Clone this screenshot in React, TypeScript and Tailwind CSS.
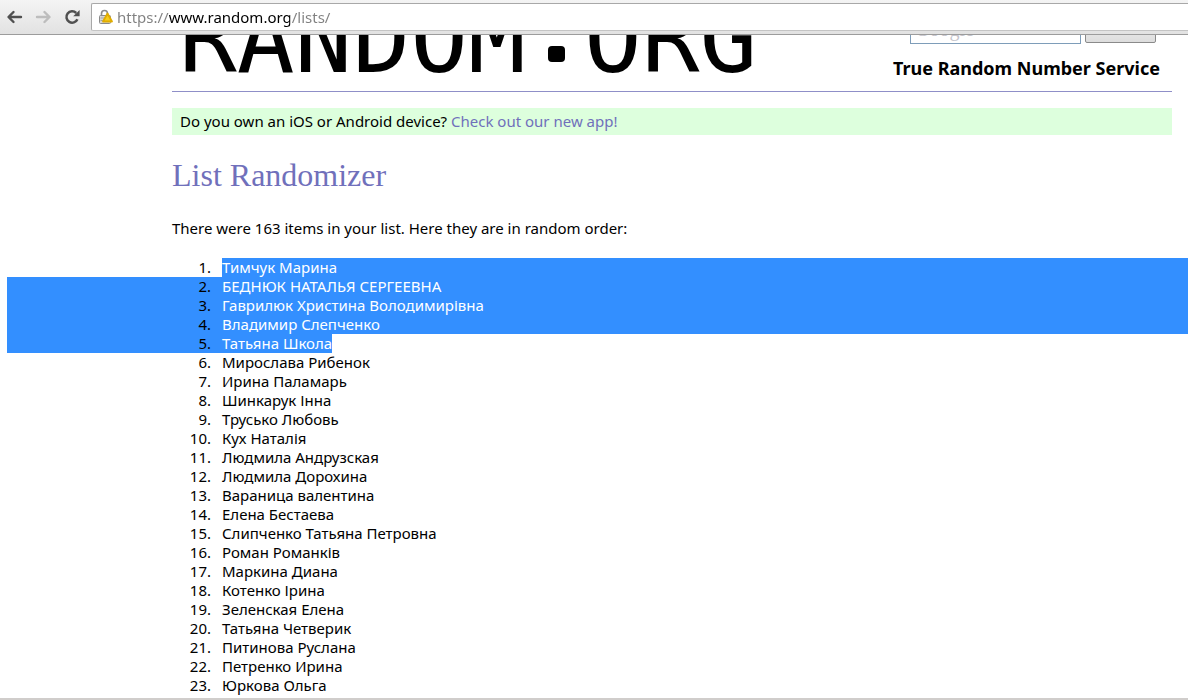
import clsx from 'clsx';

const SELECTED_COUNT = 5;

const names = [
  'Тимчук Марина',
  'БЕДНЮК НАТАЛЬЯ СЕРГЕЕВНА',
  'Гаврилюк Христина Володимирівна',
  'Владимир Слепченко',
  'Татьяна Школа',
  'Мирослава Рибенок',
  'Ирина Паламарь',
  'Шинкарук Інна',
  'Трусько Любовь',
  'Кух Наталія',
  'Людмила Андрузская',
  'Людмила Дорохина',
  'Вараница валентина',
  'Елена Бестаева',
  'Слипченко Татьяна Петровна',
  'Роман Романків',
  'Маркина Диана',
  'Котенко Ірина',
  'Зеленская Елена',
  'Татьяна Четверик',
  'Питинова Руслана',
  'Петренко Ирина',
  'Юркова Ольга',
];

const App = () => (
  <div className="flex h-screen flex-col overflow-hidden bg-white font-['Noto_Sans',sans-serif] text-[15px] leading-[19px] text-black">
    <Toolbar />
    <main className="min-h-0 flex-1 overflow-hidden border-b-2 border-[#d0cdcb]">
      <div className="mr-4 ml-[172px]">
        <Header />
        <p className="mt-4 bg-[#ddffdd] px-2 py-1">
          Do you own an iOS or Android device?{' '}
          <a href="#app" className="text-[#7070bb]">
            Check out our new app!
          </a>
        </p>
        <h2 className="mt-5 font-['Liberation_Serif',serif] text-[32px] leading-10 text-[#7070bb]">List Randomizer</h2>
        <p className="mt-6">There were 163 items in your list. Here they are in random order:</p>
      </div>
      <ol className="mt-5 ml-[7px]">
        {names.map((name, i) => (
          <Item key={name} index={i} name={name} />
        ))}
      </ol>
    </main>
  </div>
);

type ItemProps = { index: number; name: string };

const Item: React.FC<ItemProps> = ({ index, name }) => {
  const selected = index < SELECTED_COUNT;
  const first = index === 0;
  const last = index === SELECTED_COUNT - 1;

  return (
    <li className="flex">
      <span className={clsx('w-[215px] shrink-0 pr-[11px] text-right', selected && !first && 'bg-[#338fff]')}>
        {index + 1}.
      </span>
      <span className={clsx(selected && 'bg-[#338fff] text-white', !last && 'flex-1')}>{name}</span>
    </li>
  );
};

const Toolbar = () => (
  <div className="flex h-[35px] shrink-0 items-start border-b border-[#9c9c9c] bg-linear-to-b from-[#f4f4f4] to-[#e2e2e2] pt-[3px]">
    <div className="flex h-7 w-[91px] shrink-0 items-center gap-3 pl-[6px]">
      <button type="button" aria-label="Back" className="text-[#505050]">
        <ArrowIcon />
      </button>
      <button type="button" aria-label="Forward" className="rotate-180 text-[#bdbdbd]">
        <ArrowIcon />
      </button>
      <button type="button" aria-label="Reload" className="text-[#505050]">
        <ReloadIcon />
      </button>
    </div>
    <div className="flex h-7 flex-1 items-center gap-[3px] rounded-l-xs border border-r-0 border-[#a8a8a8] border-b-[#c4c4c4] bg-white pl-[6px]">
      <LockIcon />
      <input
        type="text"
        aria-label="Address"
        readOnly
        value="https://www.random.org/lists/"
        className="min-w-0 flex-1 bg-[linear-gradient(90deg,#808080_52px,#000_52px,#000_173px,#808080_173px)] bg-clip-text text-[15px] text-transparent outline-none"
      />
    </div>
  </div>
);

const Header = () => (
  <header className="-mt-10 flex justify-between border-b border-[#8f8fc8]">
    <Logo />
    <div className="flex flex-col items-end pt-5 pr-3">
      <form className="flex items-start gap-1 pr-1">
        <input
          type="text"
          aria-label="Search"
          placeholder="Google"
          className="h-[29px] w-[171px] border border-[#7e9db9] px-1 font-['Liberation_Serif',serif] text-xl placeholder:text-[#c4c4cc]"
        />
        <button
          type="button"
          className="h-7 w-[71px] rounded-xs border border-[#8a8a8a] bg-linear-to-b from-[#f4f4f4] to-[#dddddd] text-xs"
        >
          Search
        </button>
      </form>
      <p className="mt-3 text-lg leading-6 font-bold">True Random Number Service</p>
    </div>
  </header>
);

const Logo = () => (
  <svg width="600" height="96" viewBox="0 0 600 96" role="img" aria-label="RANDOM.ORG">
    <g className="font-['DejaVu_Sans_Mono',monospace] text-[96px]" fill="#000">
      <text x="7" y="77">
        RANDOM
      </text>
      <text x="412" y="77">
        ORG
      </text>
    </g>
    <rect x="376" y="51" width="17" height="16" rx="4" />
  </svg>
);

const ArrowIcon = () => (
  <svg
    width="17"
    height="16"
    viewBox="0 0 17 16"
    fill="none"
    stroke="currentColor"
    strokeWidth="2.4"
    strokeLinecap="round"
    strokeLinejoin="round"
  >
    <path d="M7.5 3 2.5 8l5 5M3 8h12" />
  </svg>
);

const ReloadIcon = () => (
  <svg width="17" height="16" viewBox="0 0 17 16">
    <path d="M13.4 10.2A5.7 5.7 0 1 1 12.2 4" fill="none" stroke="currentColor" strokeWidth="2.5" />
    <path d="M15.6 1v6.3H9.2z" fill="currentColor" />
  </svg>
);

const LockIcon = () => (
  <svg width="16" height="16" viewBox="0 0 16 16" className="shrink-0">
    <path d="M3.5 7V4.5a3 3 0 0 1 6 0V7" fill="none" stroke="#8a8a8a" strokeWidth="1.6" />
    <rect x="1.5" y="6.5" width="11" height="8" rx="1" fill="#d6d6d6" stroke="#8a8a8a" />
    <path d="M2.5 9h4M2.5 11.5h3" stroke="#a5a5a5" />
    <path d="M9.5 4.5 14 12.5H5z" fill="#f7cd1c" stroke="#e0ac00" strokeWidth="1.8" strokeLinejoin="round" />
  </svg>
);

export default App;
